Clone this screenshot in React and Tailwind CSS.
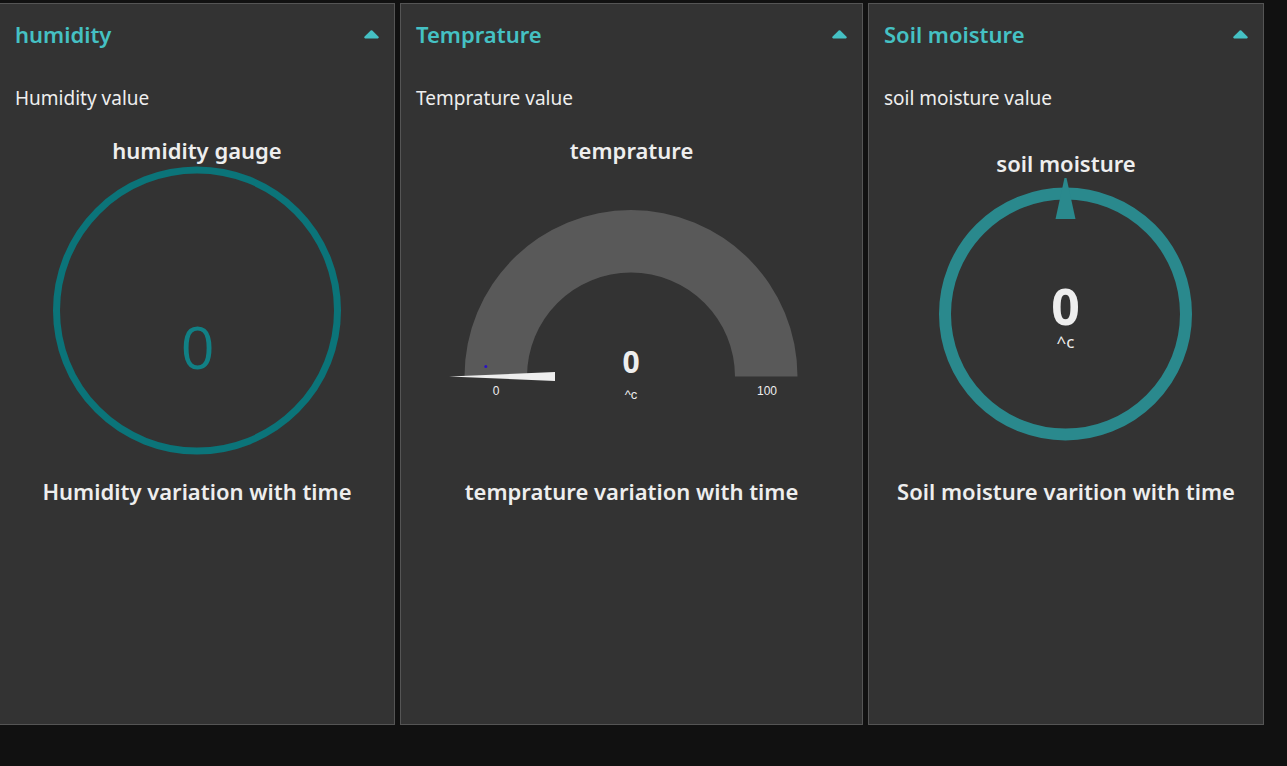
function Panel({ title, label, gauge, chartTitle, className = "" }) {
  return (
    <section className={`flex min-w-0 flex-col border border-[#555555] bg-[#333333] px-[15px] pb-[219px] ${className}`}>
      <header className="flex h-[60px] items-center justify-between">
        <h2 className="text-[22px] leading-7 font-semibold text-[#45c1c4]">{title}</h2>
        <button type="button" aria-label={`Collapse ${title}`} className="text-[#45c1c4]">
          <svg className="block" width="15" height="9" viewBox="0 0 15 9" fill="currentColor">
            <path d="M6.7 .6 Q7.5 -.1 8.3 .6 L14.6 6.8 Q15.2 8.2 13.8 8.4 H1.2 Q-.2 8.2 .4 6.8 Z" />
          </svg>
        </button>
      </header>
      <p className="flex h-[72px] items-center pb-1 text-[19px] leading-7">{label}</p>
      <div className="flex h-[341px] flex-col items-center">{gauge}</div>
      <h3 className="text-center text-[22px] leading-7 font-semibold">{chartTitle}</h3>
    </section>
  );
}

function HumidityGauge() {
  return (
    <>
      <h3 className="text-[22px] leading-7 font-semibold">humidity gauge</h3>
      <svg className="block max-w-full" width="290" height="292" viewBox="0 0 290 292" role="img" aria-label="Humidity 0">
        <circle cx="145" cy="146.5" r="140.5" fill="none" stroke="#0b7479" strokeWidth="7" />
        <text x="145.5" y="205" textAnchor="middle" fill="#118085" fontSize="59" fontFamily="'Open Sans', 'Noto Sans', sans-serif" fontWeight="400">0</text>
      </svg>
    </>
  );
}

function TemperatureGauge() {
  return (
    <>
      <h3 className="text-[22px] leading-7 font-semibold">temprature</h3>
      <svg className="block max-w-full" width="371" height="252" viewBox="0 0 371 252" role="img" aria-label="Temprature 0, range 0 to 100">
        <path d="M18.5 212.5 A166.5 166.5 0 0 1 351.5 212.5 H289 A104 104 0 0 0 81 212.5 Z" fill="#595959" />
        <path d="M3 212.5 L109 208 V217 Z" fill="#eeeeee" />
        <circle cx="39.8" cy="202.5" r="1.5" fill="#2b12c4" />
        <g fill="#eeeeee" textAnchor="middle">
          <text x="185" y="209" fontSize="30" fontWeight="700">0</text>
          <text x="185" y="235" fontSize="13" fontFamily="'Liberation Sans', Arial, sans-serif">^c</text>
          <text x="50" y="231" fontSize="12" fontFamily="'Liberation Sans', Arial, sans-serif">0</text>
          <text x="321" y="231" fontSize="12" fontFamily="'Liberation Sans', Arial, sans-serif">100</text>
        </g>
      </svg>
    </>
  );
}

function SoilGauge() {
  return (
    <>
      <h3 className="mt-[13px] text-[22px] leading-7 font-semibold">soil moisture</h3>
      <svg className="block max-w-full overflow-visible" width="256" height="266" viewBox="0 0 256 266" role="img" aria-label="Soil moisture 0">
        <circle cx="127.5" cy="137" r="120.5" fill="none" stroke="#2a898d" strokeWidth="12" />
        <path d="M126.5 1 H128.5 L137.5 42 H117.5 Z" fill="#2a898d" />
        <text fill="#eeeeee" textAnchor="middle">
          <tspan x="127.5" y="148" fontSize="50" fontWeight="700">0</tspan>
          <tspan x="127.5" y="171" fontSize="17">^c</tspan>
        </text>
      </svg>
    </>
  );
}

export default function App() {
  return (
    <main className="min-h-screen bg-[#111111] pt-[3px] pr-[23px] font-['Noto_Sans','Open_Sans',sans-serif] text-[#eeeeee]">
      <div className="grid grid-cols-[395fr_463fr_396fr] gap-[5px]">
        <Panel title="humidity" label="Humidity value" gauge={<HumidityGauge />} chartTitle="Humidity variation with time" className="border-l-0" />
        <Panel title="Temprature" label="Temprature value" gauge={<TemperatureGauge />} chartTitle="temprature variation with time" />
        <Panel title="Soil moisture" label="soil moisture value" gauge={<SoilGauge />} chartTitle="Soil moisture varition with time" />
      </div>
    </main>
  );
}
